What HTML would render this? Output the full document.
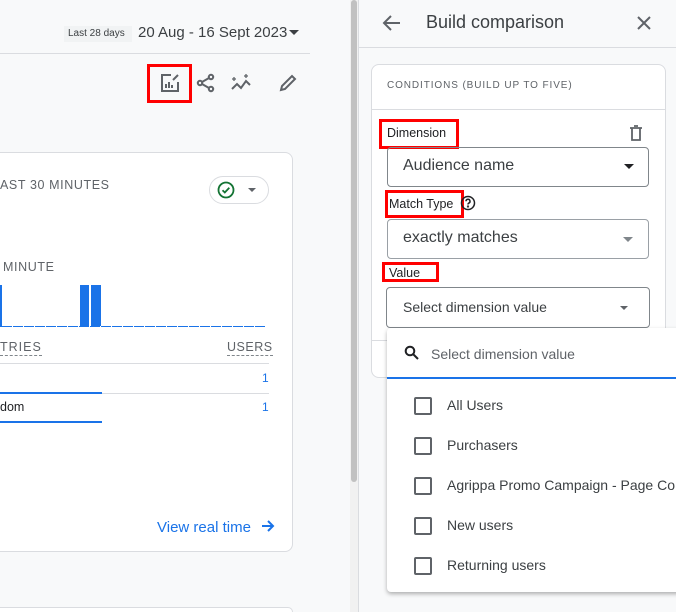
<!DOCTYPE html>
<html><head><style>
*{margin:0;padding:0;box-sizing:border-box}
html,body{width:676px;height:612px;overflow:hidden}
body{background:#f8f9fa;font-family:"Liberation Sans",Arial,sans-serif;position:relative;color:#3c4043}
.a{position:absolute}
.red{position:absolute;border:3px solid #f00}
</style></head><body>
<div class="a" style="left:0;top:53px;width:310px;height:1px;background:#dadce0"></div>
<div class="a" style="left:64px;top:26px;width:68px;height:16px;background:#f1f3f4;font-size:10px;color:#3c4043;line-height:16px;padding-left:4px">Last 28 days</div>
<div class="a" style="left:138px;top:24px;font-size:15px;color:#3c4043;white-space:nowrap">20 Aug - 16 Sept 2023</div>
<div class="a" style="left:289px;top:30px;border-left:5px solid transparent;border-right:5px solid transparent;border-top:5px solid #3c4043"></div>
<div class="red" style="left:147px;top:64px;width:45px;height:39px"></div>
<svg class="a" style="left:159px;top:72px" width="22" height="22" viewBox="0 0 22 22" fill="none" stroke="#5f6368" stroke-width="2"><path d="M12 3H3v16h16v-9"/><path d="M7 16v-4M10 16v-6M13 16v-3" /><path d="M14 8l5-5" /></svg>
<svg class="a" style="left:196px;top:73px" width="20" height="20" viewBox="0 0 20 20" fill="none" stroke="#5f6368" stroke-width="2"><circle cx="15" cy="4" r="2.2"/><circle cx="4" cy="10" r="2.2"/><circle cx="15" cy="16" r="2.2"/><path d="M6 9l7-4M6 11l7 4"/></svg>
<svg class="a" style="left:230px;top:73px" width="24" height="20" viewBox="0 0 24 20" fill="none" stroke="#5f6368" stroke-width="2"><path d="M2 16l5-5 4 4 5-7 4 4"/><path d="M4 4v4M2 6h4M16 1v4M14 3h4" stroke-width="1.3"/></svg>
<svg class="a" style="left:278px;top:73px" width="20" height="20" viewBox="0 0 20 20" fill="none" stroke="#5f6368" stroke-width="2"><path d="M3 17l1-4L14 3l3 3L7 16z"/></svg>
<div class="a" style="left:-10px;top:152px;width:303px;height:400px;background:#fff;border:1px solid #dadce0;border-radius:8px"></div>
<div class="a" style="left:0;top:178px;font-size:12.5px;letter-spacing:.6px;color:#5f6368">AST 30 MINUTES</div>
<div class="a" style="left:209px;top:176px;width:60px;height:28px;border:1px solid #dadce0;border-radius:14px"></div>
<svg class="a" style="left:217px;top:181px" width="18" height="18" viewBox="0 0 18 18" fill="none"><circle cx="9" cy="9" r="7.5" stroke="#137333" stroke-width="1.8"/><path d="M5.5 9.2l2.3 2.3 4.5-4.8" stroke="#137333" stroke-width="1.8"/></svg>
<div class="a" style="left:248px;top:188px;border-left:4px solid transparent;border-right:4px solid transparent;border-top:4px solid #5f6368"></div>
<div class="a" style="left:3px;top:260px;font-size:12.5px;color:#5f6368;letter-spacing:.6px">MINUTE</div>
<div class="a" style="left:0;top:285px;width:2px;height:42px;background:#1a73e8"></div>
<div class="a" style="left:80px;top:285px;width:9px;height:42px;background:#1a73e8"></div>
<div class="a" style="left:91px;top:285px;width:10px;height:42px;background:#1a73e8"></div>
<div class="a" style="left:2px;top:326px;width:264px;height:1px;background:repeating-linear-gradient(90deg,#1a73e8 0 10px,#fff 10px 11px)"></div>
<div class="a" style="left:0;top:340px;font-size:12.5px;color:#5f6368;letter-spacing:1px;border-bottom:1px dashed #80868b;padding-bottom:1px">TRIES</div>
<div class="a" style="left:227px;top:340px;font-size:12.5px;color:#5f6368;letter-spacing:.5px;border-bottom:1px dashed #80868b;padding-bottom:1px">USERS</div>
<div class="a" style="left:0;top:363px;width:269px;height:1px;background:#dadce0"></div>
<div class="a" style="left:262px;top:371px;font-size:12px;color:#1a73e8">1</div>
<div class="a" style="left:0;top:392px;width:102px;height:2px;background:#1a73e8"></div>
<div class="a" style="left:102px;top:393px;width:167px;height:1px;background:#dadce0"></div>
<div class="a" style="left:0;top:400px;font-size:12.5px;color:#202124">dom</div>
<div class="a" style="left:262px;top:400px;font-size:12px;color:#1a73e8">1</div>
<div class="a" style="left:0;top:421px;width:102px;height:2px;background:#1a73e8"></div>
<div class="a" style="left:157px;top:519px;font-size:15px;color:#1a73e8">View real time</div>
<svg class="a" style="left:261px;top:519px" width="14" height="14" viewBox="0 0 14 14" fill="none" stroke="#1a73e8" stroke-width="2"><path d="M1 7h11M7 2l5 5-5 5"/></svg>
<div class="a" style="left:-10px;top:607px;width:303px;height:5px;background:#fff;border:1px solid #dadce0;border-bottom:none;border-radius:8px 8px 0 0"></div>
<div class="a" style="left:350px;top:0;width:8px;height:612px;background:#f1f1f1"></div>
<div class="a" style="left:351px;top:0;width:6px;height:482px;background:#c1c1c1;border-radius:3px"></div>
<div class="a" style="left:358px;top:0;width:318px;height:612px;background:#f8f9fa;border-left:1px solid #dadce0"></div>
<svg class="a" style="left:382px;top:13px" width="20" height="20" viewBox="0 0 20 20" fill="none" stroke="#5f6368" stroke-width="2"><path d="M18 10H3M9 3l-7 7 7 7"/></svg>
<div class="a" style="left:426px;top:12px;font-size:18px;color:#3c4043">Build comparison</div>
<svg class="a" style="left:636px;top:15px" width="16" height="16" viewBox="0 0 16 16" stroke="#5f6368" stroke-width="2"><path d="M2 2l12 12M14 2L2 14"/></svg>
<div class="a" style="left:358px;top:47px;width:318px;height:1px;background:#dadce0"></div>
<div class="a" style="left:371px;top:64px;width:295px;height:314px;background:#fff;border:1px solid #dadce0;border-radius:8px"></div>
<div class="a" style="left:387px;top:80px;font-size:10px;letter-spacing:.9px;color:#5f6368">CONDITIONS (BUILD UP TO FIVE)</div>
<div class="a" style="left:372px;top:109px;width:293px;height:1px;background:#dadce0"></div>
<div class="a" style="left:387px;top:126px;font-size:12.5px;color:#202124">Dimension</div>
<div class="red" style="left:379px;top:119px;width:80px;height:30px"></div>
<svg class="a" style="left:629px;top:125px" width="14" height="16" viewBox="0 0 14 16" fill="none" stroke="#5f6368" stroke-width="1.8"><path d="M1 3h12M5 1h4M3 3v12h8V3"/></svg>
<div class="a" style="left:387px;top:147px;width:262px;height:40px;border:1px solid #80868b;border-radius:4px"></div>
<div class="a" style="left:403px;top:157px;font-size:16px;color:#3c4043">Audience name</div>
<div class="a" style="left:624px;top:164px;border-left:5px solid transparent;border-right:5px solid transparent;border-top:5px solid #202124"></div>
<div class="a" style="left:389px;top:197px;font-size:12.5px;color:#202124">Match Type</div>
<div class="red" style="left:385px;top:190px;width:79px;height:28px"></div>
<svg class="a" style="left:460px;top:195px" width="16" height="16" viewBox="0 0 16 16" fill="none" stroke="#202124" stroke-width="1.5"><circle cx="8" cy="8" r="6.5"/><path d="M6 6.3a2 2 0 1 1 2.6 1.9c-.5.2-.6.6-.6 1.3"/><circle cx="8" cy="11.5" r=".4" fill="#202124"/></svg>
<div class="a" style="left:387px;top:219px;width:262px;height:40px;border:1px solid #9aa0a6;border-radius:4px"></div>
<div class="a" style="left:403px;top:229px;font-size:16px;color:#3c4043">exactly matches</div>
<div class="a" style="left:623px;top:237px;border-left:5px solid transparent;border-right:5px solid transparent;border-top:5px solid #80868b"></div>
<div class="a" style="left:389px;top:266px;font-size:12.5px;color:#202124">Value</div>
<div class="red" style="left:382px;top:262px;width:57px;height:20px"></div>
<div class="a" style="left:386px;top:287px;width:264px;height:41px;border:1px solid #80868b;border-radius:4px"></div>
<div class="a" style="left:403px;top:299px;font-size:14px;color:#3c4043">Select dimension value</div>
<div class="a" style="left:620px;top:306px;border-left:4px solid transparent;border-right:4px solid transparent;border-top:4px solid #5f6368"></div>
<div class="a" style="left:372px;top:340px;width:293px;height:1px;background:#dadce0"></div>
<div class="a" style="left:387px;top:328px;width:300px;height:264px;background:#fff;border-radius:4px;box-shadow:0 2px 4px rgba(0,0,0,.3)"></div>
<svg class="a" style="left:404px;top:345px" width="16" height="16" viewBox="0 0 16 16" fill="none" stroke="#202124" stroke-width="2"><circle cx="6" cy="6" r="4.3"/><path d="M9 9l5 5"/></svg>
<div class="a" style="left:431px;top:346px;font-size:14px;color:#5f6368">Select dimension value</div>
<div class="a" style="left:387px;top:377px;width:289px;height:2px;background:#1a73e8"></div>
<div class="a" style="left:414px;top:397px;width:18px;height:18px;border:2px solid #5f6368;border-radius:2px"></div>
<div class="a" style="left:447px;top:397px;font-size:14px;color:#3c4043">All Users</div>
<div class="a" style="left:414px;top:437px;width:18px;height:18px;border:2px solid #5f6368;border-radius:2px"></div>
<div class="a" style="left:447px;top:437px;font-size:14px;color:#3c4043">Purchasers</div>
<div class="a" style="left:414px;top:477px;width:18px;height:18px;border:2px solid #5f6368;border-radius:2px"></div>
<div class="a" style="left:447px;top:477px;font-size:14px;color:#3c4043;white-space:nowrap">Agrippa Promo Campaign - Page Co</div>
<div class="a" style="left:414px;top:517px;width:18px;height:18px;border:2px solid #5f6368;border-radius:2px"></div>
<div class="a" style="left:447px;top:517px;font-size:14px;color:#3c4043">New users</div>
<div class="a" style="left:414px;top:557px;width:18px;height:18px;border:2px solid #5f6368;border-radius:2px"></div>
<div class="a" style="left:447px;top:557px;font-size:14px;color:#3c4043">Returning users</div>
</body></html>
